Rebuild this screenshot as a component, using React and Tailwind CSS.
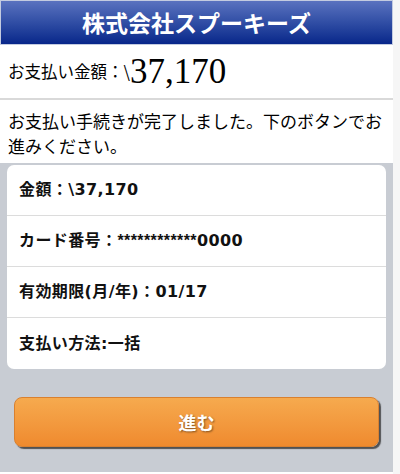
import React from "react";

const rows = [
  <>金額：\37,170</>,
  <>
    カード番号：
    <span style={{ fontFamily: '"Liberation Sans", sans-serif' }}>************</span>0000
  </>,
  <>有効期限(月/年)：01/17</>,
  <>支払い方法:一括</>,
];

const App = () => {
  return (
    <div
      className="w-[400px] h-[474px] bg-[#f6f6f6] flex"
      style={{ fontFamily: '"Noto Sans CJK JP", "Noto Sans", sans-serif' }}
    >
      <div className="w-[393px] flex flex-col bg-white">
        {/* Header */}
        <div className="h-[45px] border border-[#c3cbe0] bg-gradient-to-b from-[#5a72bf] to-[#08268a] flex items-center justify-center">
          <h1 className="text-white font-bold text-[23px] leading-none">株式会社スプーキーズ</h1>
        </div>

        {/* Amount */}
        <div className="h-[55px] px-2 flex items-center border-b-2 border-[#d9d9d9]">
          <span className="text-[16.5px] text-black">お支払い金額：\</span>
          <span
            className="text-[35px] leading-none text-black"
            style={{ fontFamily: '"Liberation Serif", serif' }}
          >
            37,170
          </span>
        </div>

        {/* Message */}
        <div className="px-2 pt-[8px] pb-[5px] text-[17px] leading-[25px] text-black">
          お支払い手続きが完了しました。下のボタンでお進みください。
        </div>

        {/* Details */}
        <div className="flex-1 bg-[#c8ccd3] pt-[2px] px-[7px] pb-[2px] flex flex-col">
          <div className="bg-white rounded-[7px] flex flex-col">
            {rows.map((r, i) => (
              <div
                key={i}
                className={`h-[51px] px-3 flex items-center font-bold text-[16px] tracking-[0.4px] text-[#111] ${
                  i < rows.length - 1 ? "border-b border-[#dcdcdc]" : ""
                }`}
                style={{ fontFamily: '"DejaVu Sans", "Noto Sans CJK JP", sans-serif' }}
              >
                <span>{r}</span>
              </div>
            ))}
          </div>

          <div className="pt-[28px] px-[7px]">
            <button className="w-full h-[50px] rounded-[8px] border border-[#d9802f] bg-gradient-to-b from-[#f6aa4e] to-[#ef8a2e] shadow-[2px_2px_1px_rgba(40,40,40,0.75)] flex items-center justify-center">
              <span className="text-white font-bold text-[18px] [text-shadow:1px_1px_2px_rgba(0,0,0,0.45)]">
                進む
              </span>
            </button>
          </div>
          <div className="flex-1" />
        </div>
        <div className="h-[2px] bg-white" />
      </div>
    </div>
  );
};

export default App;
